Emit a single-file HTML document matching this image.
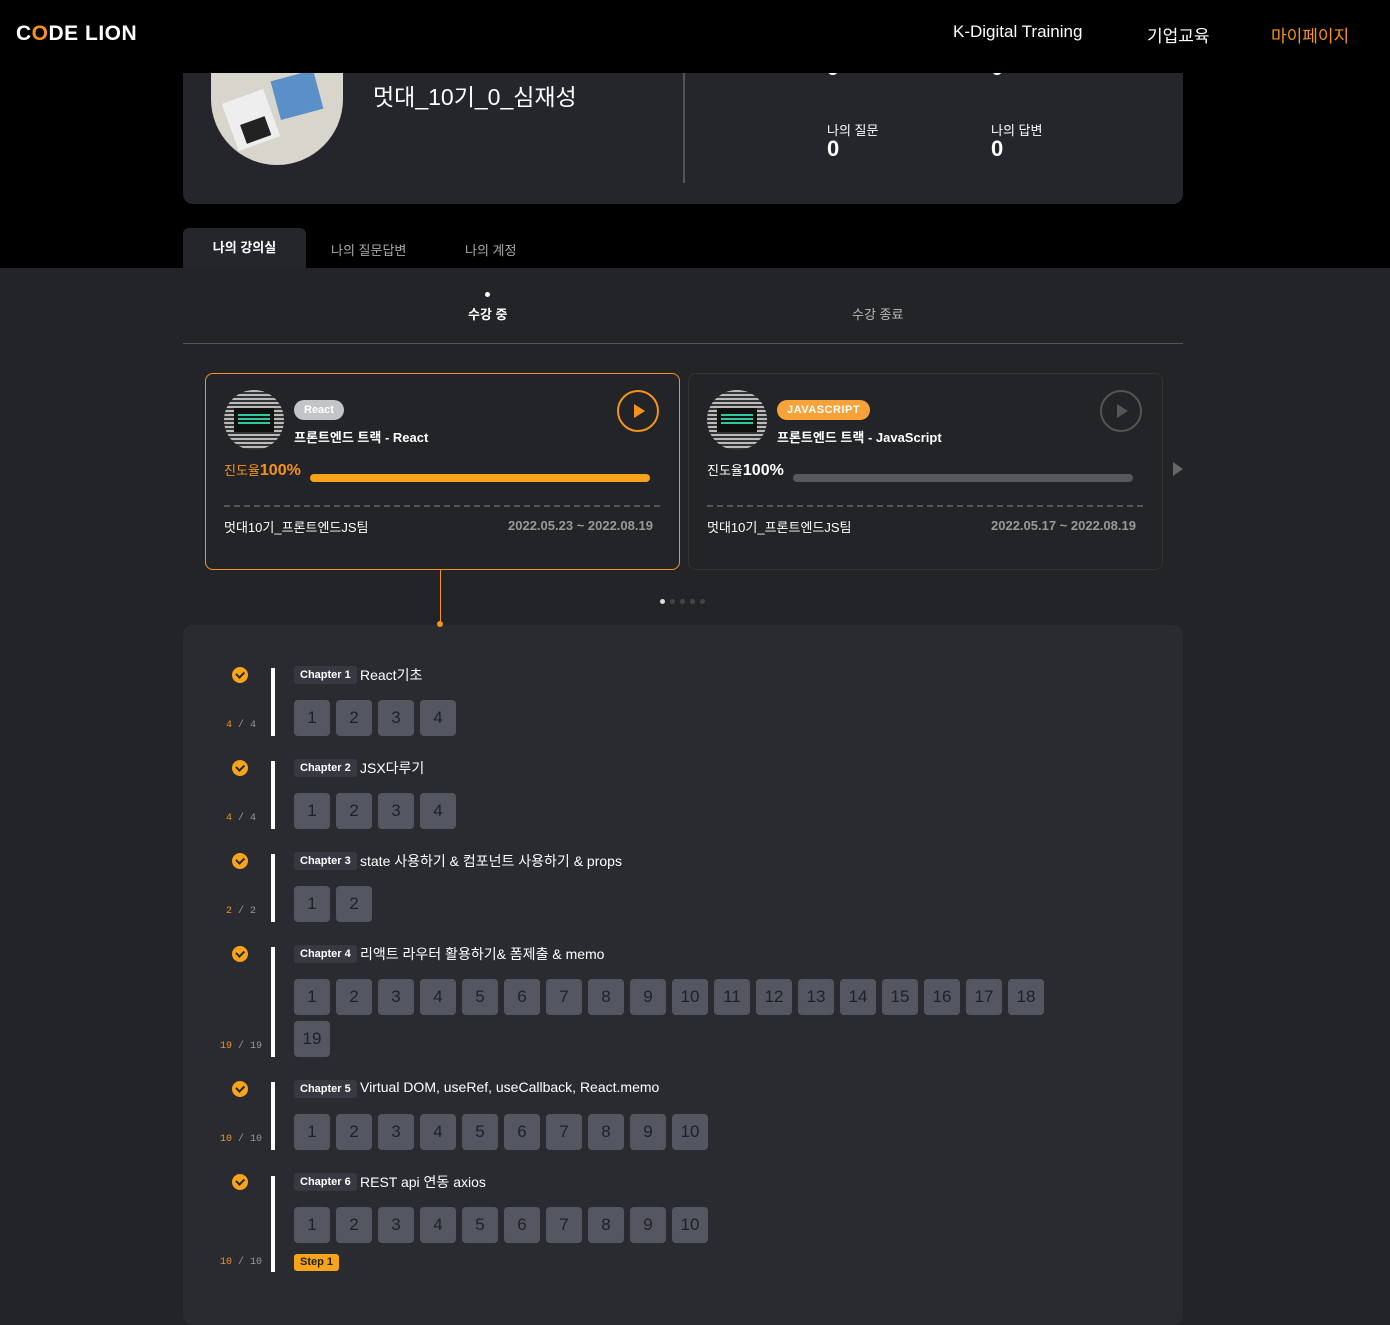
<!DOCTYPE html>
<html><head><meta charset="utf-8"><style>
*{margin:0;padding:0;box-sizing:border-box}
body{width:1390px;height:1312px;overflow:hidden;background:#232428;font-family:"Liberation Sans","Noto Sans CJK KR",sans-serif;color:#fff;position:relative}
.a{position:absolute}
.box{position:absolute;width:36px;height:36px;background:#545761;border-radius:4px;color:#202126;font-size:17px;text-align:center;line-height:36px}
.chk{position:absolute;width:16px;height:16px;border-radius:50%;background:#f7a31c}
.chk::after{content:"";position:absolute;left:4px;top:3.5px;width:6px;height:3.5px;border-left:2.2px solid #2a2b31;border-bottom:2.2px solid #2a2b31;transform:rotate(-45deg)}
.bar{position:absolute;left:271px;width:4px;background:#fff}
.lab{position:absolute;left:294px;height:18px;padding:0 6px;background:#363842;border-radius:3px;font-size:11px;font-weight:bold;line-height:18px}
.tt{position:absolute;left:360px;font-size:14px}
.cnt{position:absolute;font-family:"Liberation Mono",monospace;font-size:10px;color:#999}
.cnt b{color:#f7931c;font-weight:normal}
</style></head><body>
<div class="a" style="left:0;top:0;width:1390px;height:268px;background:#000"></div>
<div class="a" style="left:183px;top:40px;width:1000px;height:164px;background:#25262b;border-radius:0 0 10px 10px"></div>
<div class="a" style="left:827px;top:55px;font-size:22px;font-weight:bold">9</div>
<div class="a" style="left:991px;top:55px;font-size:22px;font-weight:bold">0</div>
<div class="a" style="left:0;top:0;width:1390px;height:73px;background:#000"></div>
<div class="a" style="left:16px;top:22px;font-size:21px;font-weight:900;letter-spacing:0.5px">C<span style="color:#f7931c">O</span>DE LION</div>
<div class="a" style="left:953px;top:22px;font-size:17px">K-Digital Training</div>
<div class="a" style="left:1147px;top:22px;font-size:17px">기업교육</div>
<div class="a" style="left:1271px;top:22px;font-size:17px;color:#f7931c">마이페이지</div>
<div class="a" style="left:211px;top:73px;width:132px;height:92px;border-radius:0 0 66px 66px;background:#d8d6cc;overflow:hidden"><div class="a" style="left:64px;top:2px;width:44px;height:40px;background:#5b8fc8;transform:rotate(-15deg)"></div><div class="a" style="left:18px;top:22px;width:44px;height:50px;background:#eee;transform:rotate(-20deg)"><div class="a" style="left:10px;top:26px;width:26px;height:20px;background:#222"></div></div></div>
<div class="a" style="left:373px;top:78px;font-size:23px">멋대_10기_0_심재성</div>
<div class="a" style="left:683px;top:73px;width:2px;height:110px;background:#555"></div>
<div class="a" style="left:827px;top:120px;font-size:13px">나의 질문</div>
<div class="a" style="left:827px;top:136px;font-size:22px;font-weight:bold">0</div>
<div class="a" style="left:991px;top:120px;font-size:13px">나의 답변</div>
<div class="a" style="left:991px;top:136px;font-size:22px;font-weight:bold">0</div>
<div class="a" style="left:183px;top:228px;width:123px;height:40px;background:#25262b;border-radius:6px 6px 0 0;font-size:13px;font-weight:bold;text-align:center;line-height:40px">나의 강의실</div>
<div class="a" style="left:331px;top:240px;font-size:13px;color:#aaa">나의 질문답변</div>
<div class="a" style="left:465px;top:240px;font-size:13px;color:#aaa">나의 계정</div>
<div class="a" style="left:485px;top:292px;width:5px;height:5px;border-radius:50%;background:#fff"></div>
<div class="a" style="left:468px;top:304px;font-size:13px;font-weight:bold">수강 중</div>
<div class="a" style="left:852px;top:304px;font-size:13px;color:#bbb">수강 종료</div>
<div class="a" style="left:183px;top:343px;width:1000px;height:1px;background:#555"></div>

<div class="a" style="left:205px;top:373px;width:475px;height:197px;border:1px solid #f7931c;border-radius:8px"></div>
<div class="a" style="left:688px;top:373px;width:475px;height:197px;border:1px solid #333;border-radius:8px"></div>
<div class="a" style="left:224px;top:390px;width:60px;height:60px;border-radius:50%;background:repeating-linear-gradient(#bbb 0 2px,#333 2px 4px)"><div class="a" style="left:10px;top:18px;width:40px;height:24px;background:#111"><div class="a" style="left:4px;top:6px;width:32px;height:12px;background:repeating-linear-gradient(#2ec9a0 0 2px,#111 2px 4px)"></div></div></div>
<div class="a" style="left:707px;top:390px;width:60px;height:60px;border-radius:50%;background:repeating-linear-gradient(#bbb 0 2px,#333 2px 4px)"><div class="a" style="left:10px;top:18px;width:40px;height:24px;background:#111"><div class="a" style="left:4px;top:6px;width:32px;height:12px;background:repeating-linear-gradient(#2ec9a0 0 2px,#111 2px 4px)"></div></div></div>
<div class="a" style="left:294px;top:400px;height:20px;padding:0 10px;border-radius:10px;background:#c3c4c8;font-size:11px;font-weight:bold;line-height:20px">React</div>
<div class="a" style="left:777px;top:400px;height:20px;padding:0 10px;border-radius:10px;background:#f7a33a;font-size:11px;font-weight:bold;line-height:20px;letter-spacing:0.5px">JAVASCRIPT</div>
<div class="a" style="left:294px;top:427px;font-size:13px;font-weight:bold">프론트엔드 트랙 - React</div>
<div class="a" style="left:777px;top:427px;font-size:13px;font-weight:bold">프론트엔드 트랙 - JavaScript</div>
<div class="a" style="left:617px;top:390px;width:42px;height:42px;border:2px solid #f7931c;border-radius:50%"><div class="a" style="left:15px;top:12px;border-left:11px solid #f7931c;border-top:7px solid transparent;border-bottom:7px solid transparent"></div></div>
<div class="a" style="left:1100px;top:390px;width:42px;height:42px;border:2px solid #555;border-radius:50%"><div class="a" style="left:15px;top:12px;border-left:11px solid #555;border-top:7px solid transparent;border-bottom:7px solid transparent"></div></div>
<div class="a" style="left:224px;top:460px;font-size:13px;color:#f7931c">진도율<b style="font-size:16px">100%</b></div>
<div class="a" style="left:707px;top:460px;font-size:13px">진도율<b style="font-size:16px">100%</b></div>
<div class="a" style="left:310px;top:474px;width:340px;height:8px;border-radius:4px;background:#f7a31c"></div>
<div class="a" style="left:793px;top:474px;width:340px;height:8px;border-radius:4px;background:#555761"></div>
<div class="a" style="left:224px;top:505px;width:436px;border-top:2px dashed #555"></div>
<div class="a" style="left:707px;top:505px;width:436px;border-top:2px dashed #555"></div>
<div class="a" style="left:224px;top:517px;font-size:13px">멋대10기_프론트엔드JS팀</div>
<div class="a" style="left:508px;top:518px;font-size:13px;color:#999;font-weight:bold">2022.05.23 ~ 2022.08.19</div>
<div class="a" style="left:707px;top:517px;font-size:13px">멋대10기_프론트엔드JS팀</div>
<div class="a" style="left:991px;top:518px;font-size:13px;color:#999;font-weight:bold">2022.05.17 ~ 2022.08.19</div>
<div class="a" style="left:1173px;top:462px;border-left:10px solid #666;border-top:7px solid transparent;border-bottom:7px solid transparent"></div>
<div class="a" style="left:660px;top:599px;width:5px;height:5px;border-radius:50%;background:#ddd"></div>
<div class="a" style="left:670px;top:599px;width:5px;height:5px;border-radius:50%;background:#444"></div>
<div class="a" style="left:680px;top:599px;width:5px;height:5px;border-radius:50%;background:#444"></div>
<div class="a" style="left:690px;top:599px;width:5px;height:5px;border-radius:50%;background:#444"></div>
<div class="a" style="left:700px;top:599px;width:5px;height:5px;border-radius:50%;background:#444"></div>

<div class="a" style="left:183px;top:625px;width:1000px;height:700px;background:#2a2b31;border-radius:10px"></div>
<div class="a" style="left:440px;top:570px;width:1px;height:54px;background:#f7931c"></div>
<div class="a" style="left:437px;top:621px;width:6px;height:6px;border-radius:50%;background:#f7931c"></div>

<div class="chk" style="left:232px;top:667px"></div><div class="bar" style="top:668px;height:68px"></div>
<div class="lab" style="top:666px">Chapter 1</div><div class="tt" style="top:665px">React기초</div>
<div class="cnt" style="left:226px;top:720px"><b>4</b> / 4</div>
<div class="box" style="left:294px;top:700px">1</div><div class="box" style="left:336px;top:700px">2</div><div class="box" style="left:378px;top:700px">3</div><div class="box" style="left:420px;top:700px">4</div>

<div class="chk" style="left:232px;top:760px"></div><div class="bar" style="top:761px;height:68px"></div>
<div class="lab" style="top:759px">Chapter 2</div><div class="tt" style="top:758px">JSX다루기</div>
<div class="cnt" style="left:226px;top:813px"><b>4</b> / 4</div>
<div class="box" style="left:294px;top:793px">1</div><div class="box" style="left:336px;top:793px">2</div><div class="box" style="left:378px;top:793px">3</div><div class="box" style="left:420px;top:793px">4</div>

<div class="chk" style="left:232px;top:853px"></div><div class="bar" style="top:854px;height:68px"></div>
<div class="lab" style="top:852px">Chapter 3</div><div class="tt" style="top:851px">state 사용하기 &amp; 컴포넌트 사용하기 &amp; props</div>
<div class="cnt" style="left:226px;top:906px"><b>2</b> / 2</div>
<div class="box" style="left:294px;top:886px">1</div><div class="box" style="left:336px;top:886px">2</div>

<div class="chk" style="left:232px;top:946px"></div><div class="bar" style="top:947px;height:110px"></div>
<div class="lab" style="top:945px">Chapter 4</div><div class="tt" style="top:944px">리액트 라우터 활용하기&amp; 폼제출 &amp; memo</div>
<div class="cnt" style="left:220px;top:1041px"><b>19</b> / 19</div>
<div class="box" style="left:294px;top:979px">1</div><div class="box" style="left:336px;top:979px">2</div><div class="box" style="left:378px;top:979px">3</div><div class="box" style="left:420px;top:979px">4</div><div class="box" style="left:462px;top:979px">5</div><div class="box" style="left:504px;top:979px">6</div><div class="box" style="left:546px;top:979px">7</div><div class="box" style="left:588px;top:979px">8</div><div class="box" style="left:630px;top:979px">9</div><div class="box" style="left:672px;top:979px">10</div><div class="box" style="left:714px;top:979px">11</div><div class="box" style="left:756px;top:979px">12</div><div class="box" style="left:798px;top:979px">13</div><div class="box" style="left:840px;top:979px">14</div><div class="box" style="left:882px;top:979px">15</div><div class="box" style="left:924px;top:979px">16</div><div class="box" style="left:966px;top:979px">17</div><div class="box" style="left:1008px;top:979px">18</div>
<div class="box" style="left:294px;top:1021px">19</div>

<div class="chk" style="left:232px;top:1081px"></div><div class="bar" style="top:1082px;height:68px"></div>
<div class="lab" style="top:1080px">Chapter 5</div><div class="tt" style="top:1079px">Virtual DOM, useRef, useCallback, React.memo</div>
<div class="cnt" style="left:220px;top:1134px"><b>10</b> / 10</div>
<div class="box" style="left:294px;top:1114px">1</div><div class="box" style="left:336px;top:1114px">2</div><div class="box" style="left:378px;top:1114px">3</div><div class="box" style="left:420px;top:1114px">4</div><div class="box" style="left:462px;top:1114px">5</div><div class="box" style="left:504px;top:1114px">6</div><div class="box" style="left:546px;top:1114px">7</div><div class="box" style="left:588px;top:1114px">8</div><div class="box" style="left:630px;top:1114px">9</div><div class="box" style="left:672px;top:1114px">10</div>

<div class="chk" style="left:232px;top:1174px"></div><div class="bar" style="top:1176px;height:96px"></div>
<div class="lab" style="top:1173px">Chapter 6</div><div class="tt" style="top:1172px">REST api 연동 axios</div>
<div class="cnt" style="left:220px;top:1257px"><b>10</b> / 10</div>
<div class="box" style="left:294px;top:1207px">1</div><div class="box" style="left:336px;top:1207px">2</div><div class="box" style="left:378px;top:1207px">3</div><div class="box" style="left:420px;top:1207px">4</div><div class="box" style="left:462px;top:1207px">5</div><div class="box" style="left:504px;top:1207px">6</div><div class="box" style="left:546px;top:1207px">7</div><div class="box" style="left:588px;top:1207px">8</div><div class="box" style="left:630px;top:1207px">9</div><div class="box" style="left:672px;top:1207px">10</div>
<div class="a" style="left:294px;top:1254px;height:17px;padding:0 6px;background:#f7a31c;border-radius:3px;font-size:11px;font-weight:bold;line-height:17px;color:#222">Step 1</div>
</body></html>
